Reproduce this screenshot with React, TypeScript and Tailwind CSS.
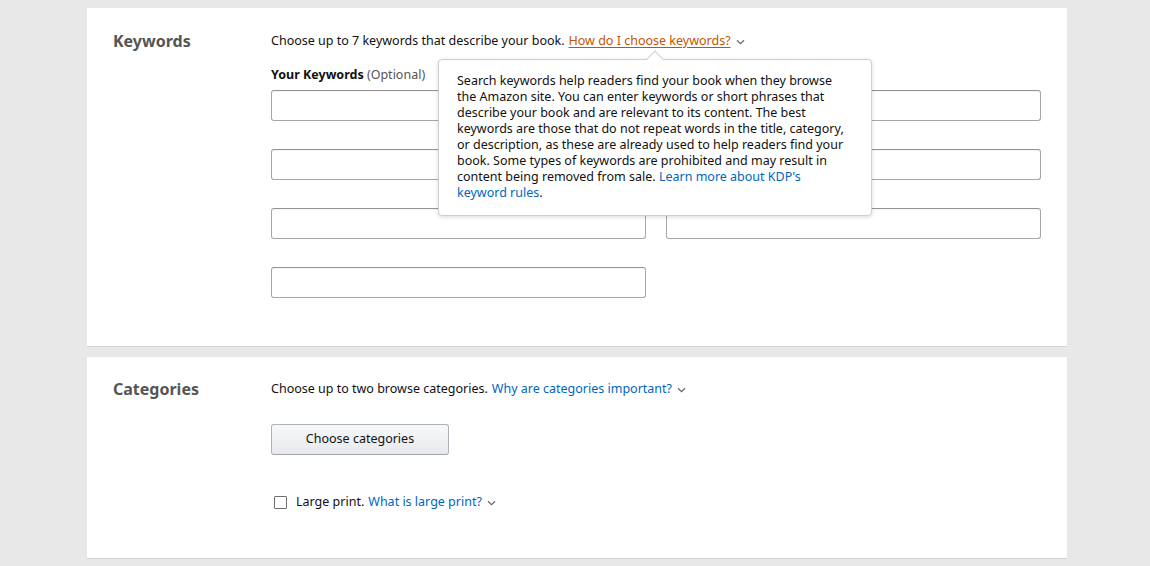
import React from "react";

function Chevron({ className = "" }: { className?: string }) {
  return (
    <svg width="9" height="6" viewBox="0 0 9 6" className={className} fill="none">
      <path d="M1 1.2 L4.5 4.6 L8 1.2" stroke="#666" strokeWidth="1.2" />
    </svg>
  );
}

function KeywordInput() {
  return (
    <input
      type="text"
      className="h-[31px] w-full rounded-[3px] border border-[#a6a6a6] border-t-[#949494] bg-white px-2 text-[13px] outline-none shadow-[inset_0_1px_0_rgba(0,0,0,0.04)]"
    />
  );
}

export default function App() {
  return (
    <div
      className="min-h-[566px] w-[1150px] bg-[#e8e8e8] pt-2 text-[12.5px] text-[#111]"
      style={{ fontFamily: '"Noto Sans", "Open Sans", Arial, sans-serif' }}
    >
      {/* Keywords card */}
      <section className="ml-[87px] flex h-[339px] w-[980px] border-b border-[#d5d5d5] bg-white pl-[26px] pt-[23px]">
        <h2 className="w-[158px] shrink-0 text-[16px] font-bold leading-[20px] text-[#555]">Keywords</h2>
        <div className="w-[770px]">
          <div className="relative flex items-center leading-[20px]">
            <span>Choose up to 7 keywords that describe your book.</span>
            <span className="ml-1 text-[#c45500] underline underline-offset-2">How do I choose keywords?</span>
            <Chevron className="ml-[5px] mt-[1px]" />

            {/* Help popover */}
            <div className="absolute left-[167px] top-[28px] z-10 w-[434px] rounded-[4px] border border-[#cfcfcf] bg-white pb-[14px] pl-[18px] pr-[20px] pt-[13px] leading-[16px] shadow-[0_1px_4px_rgba(0,0,0,0.15)]">
              <div className="absolute -top-[7px] left-[210px] h-3 w-3 rotate-45 border-l border-t border-[#cfcfcf] bg-white" />
              Search keywords help readers find your book when they browse the Amazon site. You can enter keywords or short phrases that describe your book and are relevant to its content. The best keywords are those that do not repeat words in the title, category, or description, as these are already used to help readers find your book. Some types of keywords are prohibited and may result in content being removed from sale.{" "}
              <span className="text-[#0066c0]">Learn more about KDP's keyword rules</span>.
            </div>
          </div>

          <div className="mt-[14px] leading-[20px]">
            <span className="font-bold">Your Keywords</span>{" "}
            <span className="text-[#555]">(Optional)</span>
          </div>

          <div className="mt-[5px] grid w-[770px] grid-cols-2 gap-x-[20px] gap-y-[28px]">
            <KeywordInput />
            <KeywordInput />
            <KeywordInput />
            <KeywordInput />
            <KeywordInput />
            <KeywordInput />
            <KeywordInput />
          </div>
        </div>
      </section>

      {/* Categories card */}
      <section className="ml-[87px] mt-[10px] flex h-[202px] w-[980px] border-b border-[#d5d5d5] bg-white pl-[26px] pt-[22px]">
        <h2 className="w-[158px] shrink-0 text-[16px] font-bold leading-[20px] text-[#555]">Categories</h2>
        <div>
          <div className="flex items-center leading-[20px]">
            <span>Choose up to two browse categories.</span>
            <span className="ml-1 text-[#0066c0]">Why are categories important?</span>
            <Chevron className="ml-[5px] mt-[1px]" />
          </div>

          <button className="mt-[25px] h-[31px] w-[178px] rounded-[3px] border border-[#adb1b8] border-b-[#a2a6ac] bg-gradient-to-b from-[#f7f8fa] to-[#e7e9ec] text-[12.5px] text-[#111]">
            Choose categories
          </button>

          <div className="mt-[37px] flex items-center leading-[20px]">
            <span className="ml-[3px] h-[13px] w-[13px] rounded-[1px] border border-[#6f6f6f] bg-white" />
            <span className="ml-[9px]">Large print.</span>
            <span className="ml-1 text-[#0066c0]">What is large print?</span>
            <Chevron className="ml-[5px] mt-[1px]" />
          </div>
        </div>
      </section>
    </div>
  );
}
